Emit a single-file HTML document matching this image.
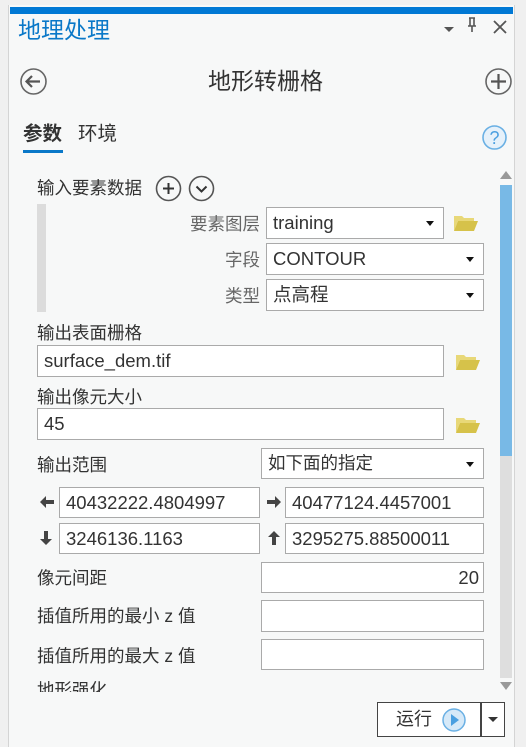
<!DOCTYPE html>
<html><head><meta charset="utf-8"><style>
*{margin:0;padding:0;box-sizing:border-box}
body{width:526px;height:747px;background:#f0f0f0;font-family:"Liberation Sans","Noto Sans CJK SC",sans-serif;color:#333;position:relative;overflow:hidden}
.panel{position:absolute;left:8px;top:5px;width:507px;height:742px;background:#f7f8f8;border-left:1px solid #d4d4d4;border-right:1px solid #d4d4d4}
.a{position:absolute}
.t{position:absolute;font-size:17.5px;line-height:22px;white-space:nowrap}
.box{position:absolute;background:#fff;border:1px solid #aaa;font-size:18.5px;line-height:29px;padding-left:6px;color:#333;white-space:nowrap;overflow:hidden}
.dd::after{content:"";position:absolute;right:9px;top:13px;border-left:4px solid transparent;border-right:4px solid transparent;border-top:5px solid #111}
.ar{position:absolute}
</style></head><body>
<div class="panel"></div>
<div class="a" style="left:10px;top:7px;width:503px;height:7px;background:#0078d4"></div>
<div class="t" style="left:18px;top:16px;font-size:23px;line-height:28px;color:#0a78c8">地理处理</div>
<div class="a" style="left:444px;top:27px;border-left:5px solid transparent;border-right:5px solid transparent;border-top:5px solid #555"></div>
<svg class="a" style="left:466px;top:17px" width="12" height="16"><path d="M3 1h6M4 1v8M8 1v8M2 9h8M6 9v6" stroke="#555" stroke-width="1.6" fill="none"/></svg>
<svg class="a" style="left:493px;top:20px" width="14" height="14"><path d="M1 1L13 13M13 1L1 13" stroke="#555" stroke-width="1.8"/></svg>
<svg class="a" style="left:19px;top:67px" width="29" height="29"><circle cx="14.5" cy="14.5" r="12.5" fill="none" stroke="#666" stroke-width="1.6"/><path d="M21 14.5H8M13 9l-5.5 5.5L13 20" stroke="#555" stroke-width="2.2" fill="none"/></svg>
<div class="t" style="left:208px;top:67px;font-size:23px;line-height:28px;color:#333">地形转栅格</div>
<svg class="a" style="left:484px;top:67px" width="29" height="29"><circle cx="14.5" cy="14.5" r="12.5" fill="none" stroke="#666" stroke-width="1.6"/><path d="M14.5 7v15M7 14.5h15" stroke="#555" stroke-width="2.2"/></svg>
<div class="t" style="left:23px;top:122px;font-size:19.5px;line-height:24px;font-weight:bold;color:#333">参数</div>
<div class="t" style="left:78px;top:122px;font-size:19.5px;line-height:24px;color:#333">环境</div>
<div class="a" style="left:23px;top:150px;width:40px;height:3px;background:#0a78c8"></div>
<svg class="a" style="left:481px;top:124px" width="27" height="27"><circle cx="13.5" cy="13.5" r="11.5" fill="#e6f1fa" stroke="#6ab0e4" stroke-width="1.6"/><text x="13.5" y="20" font-size="18" text-anchor="middle" fill="#4a9fe0" font-family="Liberation Sans">?</text></svg>
<div class="a" style="left:500px;top:171px;border-left:6px solid transparent;border-right:6px solid transparent;border-bottom:8px solid #999"></div>
<div class="a" style="left:500px;top:185px;width:12px;height:493px;background:#dedede"></div>
<div class="a" style="left:500px;top:185px;width:12px;height:271px;background:#78b9e6"></div>
<div class="a" style="left:500px;top:682px;border-left:6px solid transparent;border-right:6px solid transparent;border-top:8px solid #999"></div>
<div style="position:absolute;left:0;top:0;width:526px;height:692px;overflow:hidden">
<div class="t" style="left:37px;top:177px">输入要素数据</div>
<svg class="a" style="left:155px;top:175px" width="60" height="27"><circle cx="13.5" cy="13.5" r="12" fill="none" stroke="#555" stroke-width="1.6"/><path d="M13.5 8v11M8 13.5h11" stroke="#333" stroke-width="2"/><circle cx="46.5" cy="13.5" r="12" fill="none" stroke="#555" stroke-width="1.6"/><path d="M41.5 11.5l5 5 5-5" stroke="#333" stroke-width="2" fill="none"/></svg>
<div class="a" style="left:37px;top:204px;width:9px;height:108px;background:#dcdcdc"></div>
<div class="t" style="left:140px;width:120px;text-align:right;top:213px;color:#666">要素图层</div>
<div class="box dd" style="left:266px;top:207px;width:178px;height:32px">training</div>
<div class="t" style="left:140px;width:120px;text-align:right;top:249px;color:#666">字段</div>
<div class="box dd" style="left:266px;top:243px;width:218px;height:32px">CONTOUR</div>
<div class="t" style="left:140px;width:120px;text-align:right;top:285px;color:#666">类型</div>
<div class="box dd" style="left:266px;top:279px;width:218px;height:32px">点高程</div>
<div class="t" style="left:37px;top:322px">输出表面栅格</div>
<div class="box" style="left:37px;top:345px;width:407px;height:32px">surface_dem.tif</div>
<div class="t" style="left:37px;top:386px">输出像元大小</div>
<div class="box" style="left:37px;top:408px;width:407px;height:32px">45</div>
<div class="t" style="left:37px;top:454px">输出范围</div>
<div class="box dd" style="left:261px;top:448px;width:223px;height:31px;font-size:17.5px">如下面的指定</div>
<svg class="ar" style="left:39px;top:495px" width="16" height="14"><path d="M1 7L7 1v4h8v4H7v4z" fill="#444"/></svg>
<div class="box" style="left:59px;top:487px;width:201px;height:31px">40432222.4804997</div>
<svg class="ar" style="left:266px;top:495px" width="16" height="14"><path d="M15 7L9 1v4H1v4h8v4z" fill="#444"/></svg>
<div class="box" style="left:285px;top:487px;width:199px;height:31px">40477124.4457001</div>
<svg class="ar" style="left:39px;top:530px" width="14" height="16"><path d="M7 15L1 9h4V1h4v8h4z" fill="#444"/></svg>
<div class="box" style="left:59px;top:523px;width:201px;height:31px">3246136.1163</div>
<svg class="ar" style="left:267px;top:530px" width="14" height="16"><path d="M7 1L1 7h4v8h4V7h4z" fill="#444"/></svg>
<div class="box" style="left:285px;top:523px;width:199px;height:31px">3295275.88500011</div>
<div class="t" style="left:37px;top:567px">像元间距</div>
<div class="box" style="left:261px;top:562px;width:223px;height:31px;text-align:right;padding-right:4px">20</div>
<div class="t" style="left:37px;top:605px">插值所用的最小 z 值</div>
<div class="box" style="left:261px;top:600px;width:223px;height:32px"></div>
<div class="t" style="left:37px;top:645px">插值所用的最大 z 值</div>
<div class="box" style="left:261px;top:639px;width:223px;height:31px"></div>
<div class="t" style="left:37px;top:679px">地形强化</div>
</div>
<svg class="a" style="left:453px;top:213px" width="26" height="20"><path d="M1 3h8l2 2h10v3H5L1 18z" fill="#e8d878"/><path d="M5 8h20l-4 10H1z" fill="#d6c24a"/></svg>
<svg class="a" style="left:455px;top:352px" width="26" height="20"><path d="M1 3h8l2 2h10v3H5L1 18z" fill="#e8d878"/><path d="M5 8h20l-4 10H1z" fill="#d6c24a"/></svg>
<svg class="a" style="left:455px;top:415px" width="26" height="20"><path d="M1 3h8l2 2h10v3H5L1 18z" fill="#e8d878"/><path d="M5 8h20l-4 10H1z" fill="#d6c24a"/></svg>
<div class="a" style="left:377px;top:702px;width:104px;height:35px;background:#fff;border:1px solid #444"></div>
<div class="t" style="left:396px;top:708px;font-size:18px">运行</div>
<svg class="a" style="left:441px;top:707px" width="26" height="26"><circle cx="13" cy="13" r="11" fill="#d6e9f8" stroke="#6ab0e4" stroke-width="1.5"/><path d="M10 7l8 6-8 6z" fill="#4a9fe0"/></svg>
<div class="a" style="left:481px;top:702px;width:24px;height:35px;background:#fff;border:1px solid #444"></div>
<div class="a" style="left:488px;top:717px;border-left:5px solid transparent;border-right:5px solid transparent;border-top:5px solid #333"></div>
</body></html>
